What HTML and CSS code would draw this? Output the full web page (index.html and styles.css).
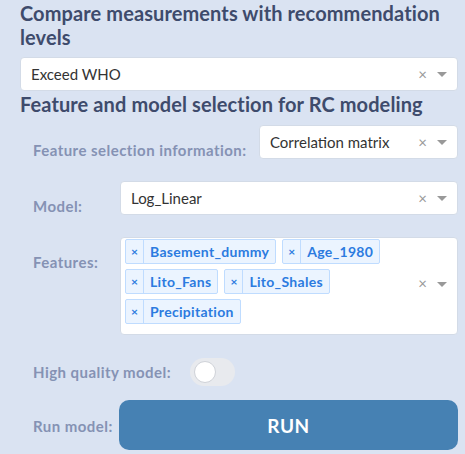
FILE: index.html
```html
<!DOCTYPE html>
<html>
<head>
<meta charset="utf-8">
<link rel="stylesheet" href="styles.css">
</head>
<body>
<div class="page">
  <h2 class="heading">Compare measurements with recommendation levels</h2>
  <div class="select full">
    <span class="value">Exceed WHO</span>
    <span class="controls"><span class="clear">×</span><span class="arrow"></span></span>
  </div>
  <h2 class="heading h2b">Feature and model selection for RC modeling</h2>

  <div class="row row-fs">
    <label class="label">Feature selection information:</label>
    <div class="select grow">
      <span class="value">Correlation matrix</span>
      <span class="controls"><span class="clear">×</span><span class="arrow"></span></span>
    </div>
  </div>

  <div class="row">
    <label class="label lw">Model:</label>
    <div class="select grow">
      <span class="value">Log_Linear</span>
      <span class="controls"><span class="clear">×</span><span class="arrow"></span></span>
    </div>
  </div>

  <div class="row">
    <label class="label lw">Features:</label>
    <div class="select grow multi">
      <div class="chips">
        <span class="chip"><span class="chip-x">×</span><span class="chip-label">Basement_dummy</span></span>
        <span class="chip"><span class="chip-x">×</span><span class="chip-label">Age_1980</span></span>
        <span class="chip"><span class="chip-x">×</span><span class="chip-label">Lito_Fans</span></span>
        <span class="chip"><span class="chip-x">×</span><span class="chip-label">Lito_Shales</span></span>
        <span class="chip"><span class="chip-x">×</span><span class="chip-label">Precipitation</span></span>
      </div>
      <span class="controls"><span class="clear">×</span><span class="arrow"></span></span>
    </div>
  </div>

  <div class="row row-hq">
    <label class="label">High quality model:</label>
    <div class="toggle"><span class="knob"></span></div>
  </div>

  <div class="row row-run">
    <label class="label">Run model:</label>
    <button class="run">RUN</button>
  </div>
</div>
</body>
</html>
```

FILE: styles.css
```css
html, body {
  margin: 0;
  padding: 0;
  background: #dae3f2;
}
body {
  font-family: Lato, "Open Sans", sans-serif;
  width: 465px;
  height: 454px;
  overflow: hidden;
}
.page {
  padding: 0 7px 0 20px;
}
.heading {
  margin: 0;
  padding-top: 1px;
  font-size: 20px;
  line-height: 24px;
  font-weight: 700;
  color: #3e4b6c;
  letter-spacing: 0.1px;
}
.h2b {
  margin-top: 0;
}
.select {
  box-sizing: border-box;
  background: #fff;
  border: 1px solid #d3dbe7;
  border-radius: 4px;
  height: 34px;
  display: flex;
  align-items: center;
  padding-left: 10px;
  color: #333;
  font-size: 15px;
}
.full {
  margin-top: 8px;
}
.value {
  flex: 1;
  white-space: nowrap;
}
.controls {
  display: flex;
  align-items: center;
  padding-right: 10px;
}
.clear {
  color: #999;
  font-size: 15px;
  width: 17px;
  text-align: center;
  line-height: 1;
}
.arrow {
  width: 0;
  height: 0;
  margin-left: 6px;
  border-style: solid;
  border-width: 5px 5px 2.5px;
  border-color: #999 transparent transparent;
  margin-top: 3px;
}
.row {
  display: flex;
  align-items: flex-start;
  padding-left: 13px;
  margin-top: 22px;
}
.row-fs {
  margin-top: 9px;
}
.label {
  color: #8592b4;
  font-size: 15px;
  line-height: 16px;
  font-weight: 700;
  padding-top: 17px;
  white-space: nowrap;
  letter-spacing: 0.45px;
}
.lw {
  width: 87px;
  flex: none;
}
.row-fs .label {
  width: 226px;
  flex: none;
}
.grow {
  flex: 1;
}
.multi {
  height: auto;
  padding: 0 0 5px 4px;
  min-height: 96px;
  align-items: center;
}
.chips {
  flex: 1;
  display: flex;
  flex-wrap: wrap;
  align-content: flex-start;
}
.chip {
  box-sizing: border-box;
  display: inline-flex;
  height: 25px;
  margin: 1px 6px 5px 0;
  background: #ebf4ff;
  border: 1px solid #bfdcff;
  border-radius: 2px;
  color: #2c7be0;
  font-size: 14px;
  font-weight: 700;
  align-items: stretch;
}
.chips .chip:nth-child(n+3) {
  margin-top: 0;
}
.chip-x {
  width: 17px;
  border-right: 1px solid #bfdcff;
  display: flex;
  align-items: center;
  justify-content: center;
  font-size: 12px;
}
.chip-label {
  display: flex;
  align-items: center;
  padding: 0 6px 0 6px;
  letter-spacing: 0.3px;
}
.row-hq {
  margin-top: 23px;
}
.row-hq .label {
  padding-top: 6px;
  width: 157px;
  flex: none;
}
.toggle {
  box-sizing: border-box;
  width: 45px;
  height: 28px;
  border-radius: 14px;
  background: #e8eaee;
  display: flex;
  align-items: center;
  padding-left: 4px;
}
.knob {
  box-sizing: border-box;
  width: 22px;
  height: 22px;
  border-radius: 50%;
  background: #fff;
  border: 1px solid #cfd2d8;
}
.row-run {
  margin-top: 14px;
}
.row-run .label {
  padding-top: 18px;
  width: 86px;
  flex: none;
}
.run {
  flex: 1;
  height: 50px;
  border: none;
  border-radius: 10px;
  background: #4681b3;
  color: #fff;
  font-family: inherit;
  font-size: 19px;
  font-weight: 700;
  letter-spacing: 0.5px;
}
```
